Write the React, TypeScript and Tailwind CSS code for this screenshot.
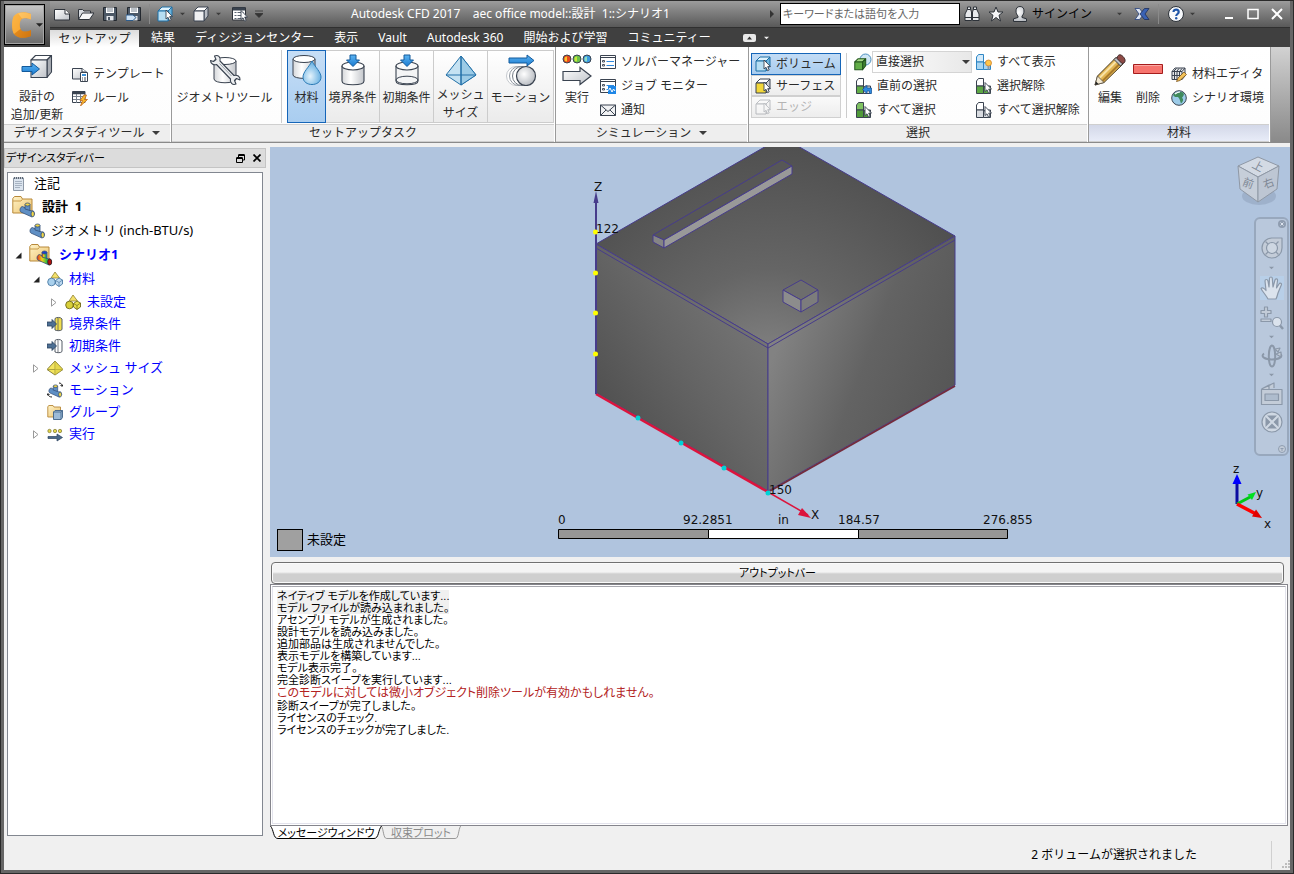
import React from "react";

type Kids = { children?: React.ReactNode };
const INK = "#3a4350";
const JP_UI = "font-['Noto_Sans','Noto_Sans_CJK_JP',sans-serif]";
const JP_LOG = "font-['Liberation_Sans','Noto_Sans_CJK_JP',sans-serif] [font-feature-settings:'palt']";

/* ---------- shared paint ---------- */
function Paints() {
  return (
    <svg width="0" height="0" className="absolute" aria-hidden="true">
      <defs>
        <linearGradient id="silver" x1="0" y1="0" x2="1" y2="1">
          <stop offset="0" stopColor="#ffffff" />
          <stop offset="1" stopColor="#bfc3c9" />
        </linearGradient>
        <linearGradient id="cyl" x1="0" y1="0" x2="1" y2="0">
          <stop offset="0" stopColor="#d5d7da" />
          <stop offset=".4" stopColor="#ffffff" />
          <stop offset="1" stopColor="#c3c6cb" />
        </linearGradient>
        <linearGradient id="blueArrow" x1="0" y1="0" x2="0" y2="1">
          <stop offset="0" stopColor="#5cb4f2" />
          <stop offset="1" stopColor="#1a7ad0" />
        </linearGradient>
        <radialGradient id="drop" cx=".4" cy=".65" r=".6">
          <stop offset="0" stopColor="#e6f4fc" />
          <stop offset="1" stopColor="#69b1e2" />
        </radialGradient>
        <radialGradient id="ball" cx=".4" cy=".4" r=".65">
          <stop offset="0" stopColor="#ffffff" />
          <stop offset="1" stopColor="#b5b9bf" />
        </radialGradient>
        <linearGradient id="gold" x1="0" y1="0" x2="1" y2="1">
          <stop offset="0" stopColor="#ffc25a" />
          <stop offset=".5" stopColor="#f59a22" />
          <stop offset="1" stopColor="#c96f10" />
        </linearGradient>
        <linearGradient id="folder" x1="0" y1="0" x2="1" y2="1">
          <stop offset="0" stopColor="#fff3c8" />
          <stop offset="1" stopColor="#ecc36e" />
        </linearGradient>
        <linearGradient id="rainbow" x1="0" y1="0" x2="1" y2="0">
          <stop offset="0" stopColor="#e02a1a" />
          <stop offset=".35" stopColor="#f4d11c" />
          <stop offset=".65" stopColor="#3fbf3a" />
          <stop offset="1" stopColor="#2b62d8" />
        </linearGradient>
      </defs>
    </svg>
  );
}

function Ico({ w = 16, h = 16, vb, children }: Kids & { w?: number; h?: number; vb?: string }) {
  return (
    <svg width={w} height={h} viewBox={vb ?? `0 0 ${w} ${h}`} className="block shrink-0" aria-hidden="true">
      {children}
    </svg>
  );
}

/* ---------- small shapes ---------- */
const Cursor = ({ x = 0, y = 0 }: { x?: number; y?: number }) => (
  <path transform={`translate(${x} ${y})`} d="M0 0v9l2-1.7 1.6 3.4 1.6-.8L3.7 6.600H6.500Z" fill="#fff" stroke={INK} strokeWidth=".9" />
);
const Caret = ({ color = "#3c3c3c", w = 7 }: { color?: string; w?: number }) => (
  <Ico w={w} h={4} vb="0 0 8 4">
    <path d="M0 0h8L4 4Z" fill={color} />
  </Ico>
);
const CubeShape = ({ top = "#fff", left = "#f0f1f3", right = "#b9bdc4", stroke = INK }) => (
  <g stroke={stroke} strokeLinejoin="round">
    <path d="M1 5 5 1H15L11 5Z" fill={top} />
    <path d="M11 5 15 1V10L11 15Z" fill={right} />
    <path d="M1 5H11V15H1Z" fill={left} />
  </g>
);
const PipeShape = ({ a = "#5f8fc4", b = "#f0d548" }) => (
  <g stroke="#34507a" strokeWidth=".8">
    <path d="M3.500 4.500 12 8.800 14.500 9 15.500 12 13 15 1.800 10C.3 8.500 1 5 3.500 4.500Z" fill={a} />
    <path d="M6 2.500h5v6L6 7Z" fill={a} />
    <ellipse cx="8.500" cy="2.500" rx="2.500" ry="1.500" fill={b} />
    <ellipse cx="13.700" cy="12" rx="1.700" ry="2.800" fill={b} />
  </g>
);

/* ---------- title bar icons ---------- */
const LogoC = () => (
  <Ico w={24} h={28}>
    <path d="M20 3C14 .5 7 .5 3 5 .5 9 .5 19 3 23c4 5 12 4.500 17 2v-6c-4 2-9 2.500-10.500-1-1-3-1-6 0-8.500C11 6.500 16 7 20 8.500Z" fill="url(#gold)" />
    <path d="M3 5c3-1 6-.5 8 2-1 .7-1.300 1.500-1.500 2.500C8 12 8.500 16 9.500 18L3 23C.5 19 .5 9 3 5Z" fill="#fbb040" opacity=".7" />
    <path d="M20 3v5.500C17 7 13.500 6.500 11 7.500L7 2.500C11 .8 16 1.200 20 3Z" fill="#ffd07a" opacity=".6" />
    <path d="M3 23 9.500 18c1.500 3.500 6.500 3 10.500 1v6c-5 2.500-13 3-17-2Z" fill="#d17a14" opacity=".55" />
  </Ico>
);
const NewDoc = () => (
  <Ico>
    <path d="M.5 3.500H11L15.500 8V14H.5Z" fill="url(#silver)" stroke="#2e333a" />
    <path d="M11 3.500V8h4.500" fill="#fff" stroke="#2e333a" />
  </Ico>
);
const OpenDoc = () => (
  <Ico>
    <path d="M.5 13.500V3.500h4l1.500 1.500H12.500V7.500" fill="#d8dce2" stroke="#2e333a" />
    <path d="M.5 13.500 4.500 7H16L11.500 13.500Z" fill="#f6f7f9" stroke="#2e333a" />
  </Ico>
);
const SaveDoc = ({ over = false }: { over?: boolean }) => (
  <Ico>
    <path d="M1.500 1.500H14.500V14.500H1.500Z" fill="#4c5866" stroke="#23282f" />
    <path d="M4 1.500h8v5.500H4Z" fill="#fff" />
    <path d="M5 3h6M5 5h6" stroke="#7b8592" />
    <path d="M4.500 10h7v4.500h-7Z" fill="#e4e7eb" />
    {over && <path d="M0 9h7l3 2.500-3 3H0Z" fill="#cfe3f5" stroke="#2e5d8c" />}
    {!over && <path d="M6 11h2v3H6Z" fill="#4c5866" />}
  </Ico>
);
const ListDoc = () => (
  <Ico>
    <path d="M.5 1.500H13.500V14H.5Z" fill="#fff" stroke="#2e333a" />
    <path d="M1 3h12" stroke="#39424e" strokeWidth="3" />
    <path d="M2.500 6.500h2m1 0h6m-9 3h2m1 0h6m-9 3h2m1 0h6" stroke="#5a6470" />
    <Cursor x={9} y={4.500} />
  </Ico>
);
const SelCube = ({ top = "#dff3fd", left = "#b6def3", right = "#6cb4dc", stroke = "#1d6ea5" }) => (
  <Ico>
    <CubeShape top={top} left={left} right={right} stroke={stroke} />
    <Cursor x={9} y={4} />
  </Ico>
);
const Cube = () => (
  <Ico>
    <CubeShape />
  </Ico>
);
const Binoculars = () => (
  <Ico>
    <g fill="#e7e9ec" stroke="#2d3239">
      <path d="M3.500 3 6.500 3 7.500 6V14.500H1V8Z" />
      <path d="M12.500 3 9.500 3 8.500 6V14.500H15V8Z" />
      <path d="M3.500 1h3v2.500h-3ZM9.500 1h3v2.500h-3Z" />
      <path d="M1 11.500h6.500M8.500 11.500H15" />
    </g>
  </Ico>
);
const Star = () => (
  <Ico>
    <path d="M8 1 10 6h5l-4 3.300L12.500 15 8 11.500 3.500 15 5 9.300 1 6H6Z" fill="#f4f5f7" stroke="#2d3239" />
  </Ico>
);
const Person = () => (
  <Ico>
    <path d="M8 .5c3 0 4 2 4 4.500 0 2-.8 4-2 5v1.500l4.500 1.300V15.500H1.500V12.800L6 11.500V10C4.800 9 4 7 4 5 4 2.500 5 .5 8 .5Z" fill="url(#ball)" stroke="#2d3239" />
  </Ico>
);
const ExchangeX = () => (
  <Ico>
    <path d="M1 2.500H5.500L9 7 9 9 5.500 13.500H1L5 8Z" fill="#dfe6f2" stroke="#24407c" strokeWidth=".8" />
    <path d="M15 2.500H10.500L6 8l4.500 5.500H15L11 8Z" fill="#3a62b4" stroke="#1d2f5c" strokeWidth=".8" />
  </Ico>
);
const Help = () => (
  <Ico w={18} h={18}>
    <circle cx="9" cy="9" r="7.500" fill="#f6f8fb" stroke="#2d3239" />
    <path d="M6.500 7c0-3.200 5.200-3.200 5.200 0C11.700 9 9.200 9 9.200 11" fill="none" stroke="#1f55a8" strokeWidth="2.200" />
    <circle cx="9.200" cy="13.200" r="1.200" fill="#1f55a8" />
  </Ico>
);

/* ---------- ribbon icons ---------- */
const CubeArrow = () => (
  <Ico w={32} h={30}>
    <g stroke={INK} strokeWidth="1.100" strokeLinejoin="round">
      <path d="M10 7 14.500 2.500H30.500L26 7Z" fill="#fff" />
      <path d="M26 7 30.500 2.500V19L26 24.500Z" fill="#a9adb4" />
      <path d="M10 7H26V24.500H10Z" fill="url(#silver)" />
    </g>
    <path d="M1 13.500H11V10L18.500 16 11 22V18.500H1Z" fill="url(#blueArrow)" stroke="#125a9c" />
  </Ico>
);
const CylTools = () => (
  <Ico w={32} h={32}>
    <path d="M5 7v18c0 5 22 5 22 0V7" fill="url(#cyl)" stroke={INK} />
    <ellipse cx="16" cy="7" rx="11" ry="3.500" fill="#fff" stroke={INK} />
    <path
      d="M1.500 6.500 4.500 7.500 7 5.500 5.500 2C9 .5 12 3 11 7L25 21.500c3-1 6.500 1 6 4.500l-3.500-1.500-2 2L27 30c-3.500 1.500-6.500-1.500-5.500-5L7.500 10.500C4.500 11.500 1.500 9.500 1.500 6.500Z"
      fill="#eceef0"
      stroke={INK}
      strokeWidth="1.100"
      strokeLinejoin="round"
    />
    <path d="M10.500 9.500 22.500 22" stroke="#9aa1aa" />
  </Ico>
);
const CylDrop = () => (
  <Ico w={32} h={32}>
    <path d="M2 5v16c0 4.500 22 4.500 22 0V5" fill="url(#cyl)" stroke={INK} />
    <ellipse cx="13" cy="5" rx="11" ry="3.500" fill="#fff" stroke={INK} />
    <path d="M21 7c3 6 9 11 9 16 0 10-18 10-18 0 0-5 6-10 9-16Z" fill="url(#drop)" stroke="#2a7ab5" />
  </Ico>
);
const CylIn = ({ clear = false }: { clear?: boolean }) => (
  <Ico w={32} h={32}>
    <path d="M5 12v15c0 5 22 5 22 0V12" fill={clear ? "#f4f5f6" : "url(#cyl)"} stroke={INK} strokeWidth="1.100" />
    <ellipse cx="16" cy="12" rx="11" ry="4" fill={clear ? "#fafafa" : "#fff"} stroke={INK} strokeWidth="1.100" />
    {clear && <ellipse cx="16" cy="26" rx="11" ry="3.800" fill="none" stroke={INK} />}
    <path d="M13 1h6v5h3.500L16 12.500 9.500 6H13Z" fill="url(#blueArrow)" stroke="#125a9c" />
  </Ico>
);
const MeshPyramid = () => (
  <Ico w={32} h={32}>
    <path d="M16 2 31 21 16 31 1 21Z" fill="#c5e2f2" stroke="#2471a8" />
    <path d="M16 2 31 21 16 31Z" fill="#9ccbe6" stroke="#2471a8" />
    <path d="M1 21H31M16 2V31" stroke="#2471a8" strokeWidth="1.100" />
  </Ico>
);
const MotionBall = () => (
  <Ico w={32} h={32}>
    <circle cx="11" cy="22" r="9.500" fill="#fff" stroke="#c4c8cd" />
    <circle cx="14" cy="22" r="9.500" fill="#fff" stroke="#9299a2" />
    <circle cx="17" cy="22" r="9.500" fill="#fff" stroke="#747c86" />
    <circle cx="21" cy="22" r="9.500" fill="url(#ball)" stroke={INK} strokeWidth="1.200" />
    <path d="M4 4H22V1L29 6.500 22 12V9H4Z" fill="url(#blueArrow)" stroke="#125a9c" />
  </Ico>
);
const RunBig = () => (
  <Ico w={30} h={32}>
    <circle cx="5" cy="5" r="4" fill="#e84a1e" stroke={INK} />
    <circle cx="15" cy="5" r="4" fill="#6cc24a" stroke={INK} />
    <circle cx="25" cy="5" r="4" fill="#3c9be0" stroke={INK} />
    <path d="M2.500 5a2.500 2.500 0 0 1 2.500-2.500v5A2.500 2.500 0 0 1 2.500 5Z" fill="#f9c62a" />
    <path d="M12.500 5a2.500 2.500 0 0 1 2.500-2.500v5A2.500 2.500 0 0 1 12.500 5Z" fill="#c8e63a" />
    <path d="M22.500 5a2.500 2.500 0 0 1 2.500-2.500v5A2.500 2.500 0 0 1 22.500 5Z" fill="#8fe0c0" />
    <path d="M1 17.500H18V13.500L29 22 18 30.500V26.500H1Z" fill="url(#silver)" stroke={INK} strokeWidth="1.200" />
  </Ico>
);
const Pencil = () => (
  <Ico w={32} h={32}>
    <path d="M1 31 3.500 22 22 3.500 29 10 10 28.500Z" fill="#e2b653" stroke="#4a3a20" />
    <path d="M5.500 24 24 5.500" stroke="#f8e2a6" strokeWidth="2" />
    <path d="M8.500 27 27 8.500" stroke="#a97a2a" strokeWidth="2" />
    <path d="M20 5.500 22.500 3l6.500 6.500L26.500 12Z" fill="#b9bdc3" stroke="#3f3f3f" />
    <path d="M23.500 2.500C25 0 27 .5 29 2.500s3 4.500 1 6.500l-2 .5-5-5Z" fill="#8d4a46" stroke="#3f2a2a" />
    <path d="M1 31 3.500 22 10 28.500Z" fill="#f4ead3" stroke="#5b5346" strokeWidth=".8" />
    <path d="M1 31 2 27.500 4.500 30Z" fill="#222" />
  </Ico>
);
const RedBar = () => (
  <Ico w={30} h={32}>
    <path d="M.5 10.500H29.500V19.500H.5Z" fill="#f7746e" stroke="#a51c1c" />
    <path d="M1.500 11.500h27" stroke="#fba9a4" />
  </Ico>
);
const Template = () => (
  <Ico>
    <path d="M.5 2.500H10L14.500 6V13H.5Z" fill="url(#silver)" stroke={INK} />
    <path d="M10 2.500V6h4.500" fill="#fff" stroke={INK} />
    <path d="M8.500 6.500h7v9h-7Z" fill="#fff" stroke={INK} />
    <path d="M10 8h4v2h-4Z" fill="#3c8fd6" />
    <path d="M10 12h1m1 0h2m-4 2h1m1 0h2" stroke={INK} />
  </Ico>
);
const Rule = () => (
  <Ico>
    <path d="M.5 1.500H13V12.500H.5Z" fill="#fff" stroke={INK} />
    <path d="M.5 3h12.500" stroke={INK} strokeWidth="2.500" />
    <path d="M1 6.500h12M1 9.500h12M4.500 4v9M8.500 4v9" stroke="#77808c" />
    <path d="M12 5 8 10.500h2.500L8.500 16 15.500 9.500H12.500L14.500 5Z" fill="#f7b92c" stroke="#c0651a" strokeWidth=".8" />
  </Ico>
);
const Manager = ({ wave = false }: { wave?: boolean }) => (
  <Ico>
    <path d="M.5 1.500H15.500V14.500H.5Z" fill="#fff" stroke={INK} />
    <path d="M1 3.500h14" stroke={INK} />
    <path d="M2.500 6.500h2v1.500h-2ZM2.500 10.500h2V12h-2Z" fill="none" stroke={INK} strokeWidth=".9" />
    <path d="M6.500 7.500h7.500M6.500 11.500h7.500" stroke="#2f8ae0" strokeWidth="1.200" />
    {wave && (
      <>
        <path d="M8 8h8v8H8Z" fill="#1e86e6" />
        <path d="M8.500 12.500 10 10l2 4 1.500-3 1.500 2" fill="none" stroke="#fff" />
      </>
    )}
  </Ico>
);
const Mail = () => (
  <Ico>
    <path d="M.5 3H15.500V13.500H.5Z" fill="#f1f2f4" stroke={INK} />
    <path d="M.5 3 8 9.500 15.500 3M.5 13.500 6 8M15.500 13.500 10 8" fill="none" stroke={INK} />
  </Ico>
);
const DirectSel = () => (
  <Ico w={18} h={18}>
    <circle cx="11.500" cy="6.500" r="5.500" fill="#cfe6f5" stroke="#4b8fbf" />
    <g transform="translate(0 5) scale(.78)" stroke="#22551d" strokeWidth="1.300" strokeLinejoin="round">
      <path d="M1 5 5 1H15L11 5Z" fill="#a9db8a" />
      <path d="M11 5 15 1V10L11 15Z" fill="#3f7f30" />
      <path d="M1 5H11V15H1Z" fill="#62ad47" />
    </g>
  </Ico>
);
type Stack = { upper: string; lower: string; base?: string; stroke?: string; mark: "back" | "cursor" | "bulb" };
const StackCubes = ({ upper, lower, base, stroke = INK, mark }: Stack) => (
  <Ico>
    <g stroke={stroke} strokeWidth="1" strokeLinejoin="round">
      <path d="M.5 3 2.500.5H7.500V8H.5Z" fill={upper} />
      <path d="M.5 8H7.500V15.500H.5Z" fill={lower} />
      <path d="M7.500 10 9 8H14.500V15.500H7.500Z" fill={base ?? lower} />
    </g>
    {mark === "cursor" && <Cursor x={9} y={4.500} />}
    {mark === "back" && <path d="M6.500 11.500 11 7.500V10H15.500V15.500H13.500V13H11V15.500Z" fill="#2f8ae0" stroke="#0f4f93" strokeWidth=".7" />}
    {mark === "bulb" && (
      <>
        <circle cx="12.500" cy="9" r="3" fill="#ffc64a" stroke="#d0822a" strokeWidth=".8" />
        <path d="M11.500 12h2V15.500h-2Z" fill="#8c95a0" />
      </>
    )}
  </Ico>
);
const MatEditor = () => (
  <Ico>
    <path d="M1 5.500 4 2H14V10L11 13.500H1Z" fill="#e6e8ea" stroke={INK} />
    <path d="M1 5.500H11V13.500M11 5.500 14 2M3.500 5v8M6 5v8M8.500 5v8M1 9.500h10M5.500 2.500 3 5M8 2.500 6 5M11 2.500 9 5" fill="none" stroke={INK} />
    <path d="M5.500 15.500 7 12 13 6l2.500 2.500L9 14.500Z" fill="#f4c35a" stroke="#7a5420" strokeWidth=".8" />
  </Ico>
);
const Globe = () => (
  <Ico>
    <circle cx="8" cy="8" r="7.300" fill="#9ccbe8" stroke={INK} />
    <path d="M2 5C4 2 8 1.500 12 2.500 14 5 12 6 11 8c2 1 1 4-1 5.500C9 11 9 9 7 7 5 6.500 4 8 2 5Z" fill="#3f8a5c" />
    <path d="M4 4c2-1.500 3-2 5-2" stroke="#fff" strokeWidth="1.200" fill="none" />
  </Ico>
);

/* ---------- tree icons ---------- */
const Note = () => (
  <Ico>
    <path d="M1.500 2H11.500V14.500H1.500Z" fill="#dce5ef" stroke="#8d98a6" />
    <path d="M2.500 1v2m2-2v2m2-2v2m2-2v2m2-2v2" stroke="#5b6674" />
    <path d="M3 5.500h7M3 7.500h7M3 9.500h7M3 11.500h5" stroke="#a7b3c2" />
  </Ico>
);
const FolderPipe = ({ hot = false }: { hot?: boolean }) => (
  <Ico w={24} h={24}>
    <path d="M.8 18V3.500L2.500 1.500H9L10.500 4H20V18Z" fill="url(#folder)" stroke="#b8893a" />
    <path d="M1 6h8l1.500-1.800" fill="none" stroke="#c99b4b" />
    <g transform="translate(7 7)">
      <PipeShape a={hot ? "url(#rainbow)" : "#5f8fc4"} b={hot ? "#1a3fd0" : "#f0d548"} />
      {hot && <ellipse cx="13.700" cy="12" rx="2" ry="3" fill="#b3130d" stroke="#222" strokeWidth=".7" />}
    </g>
  </Ico>
);
const Pipe = () => (
  <Ico>
    <PipeShape />
  </Ico>
);
const Materials = ({ yellow = false }: { yellow?: boolean }) => (
  <Ico>
    <path d="M8 1 12.500 7H4Z" fill="#f3e06a" stroke="#8f8230" strokeWidth=".8" />
    <circle cx="4.500" cy="11" r="3.800" fill={yellow ? "#d8cf38" : "#a9d0ec"} stroke={yellow ? "#6e6818" : "#4b7ba5"} strokeWidth=".9" />
    <path d="M8.500 9.500 12 7l3.500 2V13L12 15.500 8.500 13Z" fill={yellow ? "#e8de4a" : "#bcd8ef"} stroke={yellow ? "#6e6818" : "#4b7ba5"} strokeWidth=".9" />
    <path d="M8.500 9.500 12 11.500 15.500 9M12 11.500v4" fill="none" stroke={yellow ? "#6e6818" : "#4b7ba5"} strokeWidth=".7" />
  </Ico>
);
const Condition = ({ fill = "#f1de4e" }: { fill?: string }) => (
  <Ico>
    <path d="M8 2.500C9 1 14 1 15 3V13.500C14 15 10 15 8 14Z" fill={fill} stroke="#555c66" />
    <path d="M11 2v12.500" stroke="#555c66" strokeWidth=".8" />
    <path d="M0 6h5V3.500L9.500 8 5 12.500V10H0Z" fill="#4d6f93" stroke="#2c435e" strokeWidth=".8" />
  </Ico>
);
const MeshYellow = () => (
  <Ico>
    <path d="M8 1 16 9.500 8 15 0 9.500Z" fill="#f3e560" stroke="#7d7530" strokeWidth=".9" />
    <path d="M8 1v14M0 9.500h16" stroke="#a79c3a" strokeWidth=".9" />
    <path d="M8 1 16 9.500 8 15Z" fill="#d8c93a" opacity=".5" />
  </Ico>
);
const PipeMotion = () => (
  <Ico>
    <g transform="translate(1 2) scale(.88)">
      <PipeShape />
    </g>
    <path d="M12 1c1.800 0 3 1 3 3M13.500 3 15 4.500 16 2.500M1 12c0 2 2 3 4 3M0 13.500 1 11.500 2.500 13" fill="none" stroke="#222" />
  </Ico>
);
const Group = () => (
  <Ico>
    <path d="M.8 13V2.500L2 1.500H6L7 3H13.500V13Z" fill="url(#folder)" stroke="#b8893a" strokeWidth=".9" />
    <path d="M6.500 8 8 6.500H15.500V13.500L14 15.500H6.500Z" fill="#9dbbd8" stroke="#3f6288" strokeWidth=".9" />
    <path d="M6.500 8H14V15.500M14 8l1.500-1.500" fill="none" stroke="#3f6288" strokeWidth=".8" />
  </Ico>
);
const RunSmall = () => (
  <Ico>
    <g fill="#e3d648" stroke="#7d7530" strokeWidth=".7">
      <circle cx="2.500" cy="5" r="1.700" />
      <circle cx="8" cy="5" r="1.700" />
      <circle cx="13" cy="5" r="1.700" />
    </g>
    <path d="M1 10.500h9V8L15.500 11.500 10 15V12.500H1Z" fill="#49688a" stroke="#2c435e" strokeWidth=".7" />
  </Ico>
);

/* ---------- header ---------- */
const IconButton = ({ label, children, className = "" }: Kids & { label: string; className?: string }) => (
  <button type="button" aria-label={label} className={`flex shrink-0 items-center justify-center ${className}`}>
    {children}
  </button>
);

const MENU = ["結果", "ディシジョンセンター", "表示", "Vault", "Autodesk 360", "開始および学習", "コミュニティー"];

function Header() {
  return (
    <header className="flex bg-[#404040]">
      <div className="w-[46px] shrink-0 bg-linear-to-b from-[#8f8f8f] via-[#606060] via-60% to-[#404040] pt-[3px]">
        <button type="button" aria-label="アプリケーション メニュー" className="flex h-[41px] w-[41px] items-center gap-px border border-black bg-linear-to-b from-[#c9c9c9] to-[#6a6a6a] pl-[6px] shadow-[inset_0_0_0_1px_#a4a4a4]">
          <LogoC />
          <Caret color="#222" w={7} />
        </button>
      </div>
      <div className="min-w-0 flex-1">
        <div className="flex h-[27px] items-center border-b border-[#303030] bg-linear-to-b from-[#9c9c9c] to-[#595959]">
          <div className="flex items-center gap-2 pl-1">
            <IconButton label="新規"><NewDoc /></IconButton>
            <IconButton label="開く"><OpenDoc /></IconButton>
            <IconButton label="保存"><SaveDoc /></IconButton>
            <IconButton label="名前を付けて保存"><SaveDoc over /></IconButton>
          </div>
          <span className="mx-[7px] h-5 w-px bg-[#8a8a8a]" />
          <div className="flex items-center gap-[7px]">
            <IconButton label="ボリューム選択"><SelCube /></IconButton>
            <IconButton label="選択メニュー"><Caret w={5} /></IconButton>
            <IconButton label="外観" className="ml-px"><Cube /></IconButton>
            <IconButton label="外観メニュー"><Caret w={5} /></IconButton>
            <IconButton label="リスト" className="ml-1"><ListDoc /></IconButton>
            <IconButton label="カスタマイズ">
              <Ico w={8} h={8}>
                <path d="M0 1h8M0 3.500h8L4 7.500Z" fill="#333" stroke="#333" strokeWidth=".8" />
              </Ico>
            </IconButton>
          </div>
          <h1 className="min-w-0 flex-1 truncate text-center text-xs whitespace-pre text-white">
            {"Autodesk CFD 2017    aec office model::設計  1::シナリオ1"}
          </h1>
          <span className="mr-[6px] ml-3">
            <Ico w={4} h={8}><path d="M0 0 4 4 0 8Z" fill="#333" /></Ico>
          </span>
          <input aria-label="検索" placeholder="キーワードまたは語句を入力" className={`h-[22px] w-[180px] border border-black bg-white px-[2px] text-[11px] text-black placeholder:text-[#666] ${JP_LOG}`} />
          <div className="flex items-center gap-2 pl-1">
            <IconButton label="検索する"><Binoculars /></IconButton>
            <IconButton label="お気に入り"><Star /></IconButton>
            <button type="button" className="flex items-center gap-1 text-xs text-black">
              <Person />
              サインイン
            </button>
            <IconButton label="アカウント" className="ml-[17px]"><Caret w={5} /></IconButton>
            <IconButton label="Exchange" className="ml-1"><ExchangeX /></IconButton>
          </div>
          <span className="mx-[8px] h-5 w-px bg-[#8a8a8a]" />
          <IconButton label="ヘルプ"><Help /></IconButton>
          <IconButton label="ヘルプ メニュー" className="ml-[5px]"><Caret w={5} /></IconButton>
          <div className="ml-7 flex items-center gap-3 pr-[7px]">
            <IconButton label="最小化"><Ico w={12} h={12}><path d="M2 10h8" stroke="#fff" strokeWidth="2" /></Ico></IconButton>
            <IconButton label="最大化"><Ico w={12} h={12}><path d="M1 1.500h10v9H1Z" fill="none" stroke="#fff" strokeWidth="1.500" /></Ico></IconButton>
            <IconButton label="閉じる"><Ico w={12} h={12}><path d="M1 1l10 10M11 1 1 11" stroke="#fff" strokeWidth="2" /></Ico></IconButton>
          </div>
        </div>
        <nav className="flex h-[19px] items-end gap-5 text-xs whitespace-nowrap text-white">
          <button type="button" className="-mr-2 h-[17px] w-[89px] bg-linear-to-b from-[#dcdcdc] to-white leading-[17px] text-[#222]">セットアップ</button>
          {MENU.map((m) => (
            <button type="button" key={m} className="h-[18px] leading-[18px]">{m}</button>
          ))}
          <button type="button" aria-label="リボンを最小化" className="ml-3 flex h-[18px] items-center gap-2">
            <Ico w={13} h={8}><rect width="13" height="8" rx="2" fill="#e8e8e8" /><path d="M4 5.500h5L6.500 2.500Z" fill="#333" /></Ico>
            <Caret color="#eee" w={5} />
          </button>
        </nav>
      </div>
    </header>
  );
}

/* ---------- ribbon ---------- */
function Panel({ title, width, menu, tint, children }: Kids & { title: string; width: string; menu?: boolean; tint?: boolean }) {
  return (
    <section className={`flex shrink-0 flex-col border-r border-[#9a9a9a] pr-px ${width}`}>
      <div className="flex h-[77px] bg-linear-to-b from-white to-[#fdfdfd]">{children}</div>
      <h2 className={`flex h-[18px] items-center justify-center gap-2 border-t border-b border-[#cfcfcf] text-xs ${tint ? "bg-linear-to-b from-[#d3d8e8] to-[#e8ecf8]" : "bg-[#eeeeee]"}`}>
        {title}
        {menu && <Caret w={8} />}
      </h2>
    </section>
  );
}
const Big = ({ icon, lines, className = "" }: { icon: React.ReactNode; lines: string[]; className?: string }) => (
  <button type="button" className={`flex shrink-0 flex-col items-center text-xs leading-[18px] whitespace-nowrap ${className}`}>
    <span className="flex h-9 items-start pt-px">{icon}</span>
    {lines.map((l) => (
      <span key={l}>{l}</span>
    ))}
  </button>
);
const Small = ({ icon, text }: { icon: React.ReactNode; text: string }) => (
  <button type="button" className="flex h-6 items-center gap-[5px] text-xs whitespace-nowrap">
    {icon}
    {text}
  </button>
);
const Toggle = ({ icon, text, on, off }: { icon: React.ReactNode; text: string; on?: boolean; off?: boolean }) => (
  <button
    type="button"
    disabled={off}
    aria-pressed={!!on}
    className={`flex h-[22px] w-[90px] items-center gap-[5px] border pl-[3px] text-xs whitespace-nowrap ${
      on ? "border-[#1565b8] bg-linear-to-b from-[#c3dcf5] to-[#a8ccef]" : "border-[#d0d0d0] bg-linear-to-b from-[#fafafa] to-[#ededed]"
    } ${off ? "text-[#b4b4b4]" : ""}`}
  >
    {icon}
    {text}
  </button>
);
const TASK = "h-[73px] border border-l-0 border-[#cccccc] bg-linear-to-b from-white to-[#ebebeb] pt-[2px]";

function Ribbon() {
  return (
    <div className="flex h-24 border-b border-[#8a8a8a] bg-white text-[#2b2b2b]">
      <Panel title="デザインスタディツール" width="w-[168px]" menu>
        <Big icon={<CubeArrow />} lines={["設計の", "追加/更新"]} className="w-[66px] pt-[5px]" />
        <div className="flex flex-col pt-[15px] pl-[2px]">
          <Small icon={<Template />} text="テンプレート" />
          <Small icon={<Rule />} text="ルール" />
        </div>
      </Panel>
      <Panel title="セットアップタスク" width="w-[384px]">
        <Big icon={<CylTools />} lines={["ジオメトリツール"]} className="mt-[3px] mr-[5px] h-[73px] w-[110px] border-r border-[#cccccc] pt-[3px] pr-1" />
        <Big icon={<CylDrop />} lines={["材料"]} className="mt-[3px] h-[73px] w-[39px] border border-[#1565b8] bg-linear-to-b from-[#c6def6] to-[#a9cdf0] pt-[2px]" />
        <Big icon={<CylIn />} lines={["境界条件"]} className={`mt-[3px] w-[54px] ${TASK}`} />
        <Big icon={<CylIn clear />} lines={["初期条件"]} className={`mt-[3px] w-[54px] ${TASK}`} />
        <Big icon={<MeshPyramid />} lines={["メッシュ", "サイズ"]} className={`mt-[3px] w-[54px] ${TASK}`} />
        <Big icon={<MotionBall />} lines={["モーション"]} className={`mt-[3px] w-[66px] ${TASK}`} />
      </Panel>
      <Panel title="シミュレーション" width="w-[193px]" menu>
        <Big icon={<RunBig />} lines={["実行"]} className="w-[42px] pt-[6px]" />
        <div className="flex flex-col pt-[3px] pl-[2px]">
          <Small icon={<Manager />} text="ソルバーマネージャー" />
          <Small icon={<Manager wave />} text="ジョブ モニター" />
          <Small icon={<Mail />} text="通知" />
        </div>
      </Panel>
      <Panel title="選択" width="w-[340px]">
        <div className="my-[6px] flex w-[98px] flex-col border-r border-[#cccccc] pl-[2px]">
          <Toggle on icon={<SelCube />} text="ボリューム" />
          <Toggle icon={<SelCube top="#fff" left="#f2d73a" right="#c9ccd2" stroke={INK} />} text="サーフェス" />
          <Toggle off icon={<span className="opacity-30"><SelCube top="#fff" left="#fff" right="#eee" stroke={INK} /></span>} text="エッジ" />
        </div>
        <div className="flex w-[128px] flex-col pt-[3px] pl-[7px]">
          <div className="flex h-6 items-center">
            <DirectSel />
            <div className="relative">
              <select aria-label="選択モード" className="block h-[22px] w-[100px] appearance-none border border-[#d4d4d4] bg-linear-to-r from-white to-[#e8e8e8] pl-[3px] text-xs">
                <option>直接選択</option>
              </select>
              <span className="pointer-events-none absolute top-[9px] right-[2px]"><Caret w={8} /></span>
            </div>
          </div>
          <div className="pl-[2px]">
            <Small icon={<StackCubes upper="#fff" lower="#62ad47" base="#d8dbe0" mark="back" />} text="直前の選択" />
            <Small icon={<StackCubes upper="#7fc262" lower="#4f9a38" mark="cursor" />} text="すべて選択" />
          </div>
        </div>
        <div className="flex flex-col pt-[3px] pl-px">
          <Small icon={<StackCubes upper="#d3eafa" lower="#a9d5f1" stroke="#2f86c4" mark="bulb" />} text="すべて表示" />
          <Small icon={<StackCubes upper="#fff" lower="#5da744" mark="cursor" />} text="選択解除" />
          <Small icon={<StackCubes upper="#fff" lower="#d8dbe0" mark="cursor" />} text="すべて選択解除" />
        </div>
      </Panel>
      <Panel title="材料" width="w-[182px]" tint>
        <Big icon={<Pencil />} lines={["編集"]} className="w-[42px] pt-[6px]" />
        <Big icon={<RedBar />} lines={["削除"]} className="w-[34px] pt-[6px]" />
        <div className="flex flex-col pt-[15px] pl-[6px]">
          <Small icon={<MatEditor />} text="材料エディタ" />
          <Small icon={<Globe />} text="シナリオ環境" />
        </div>
      </Panel>
      <div className="flex-1 bg-linear-to-b from-[#d2d2d2] to-[#8a8a8a]" />
    </div>
  );
}

/* ---------- study tree ---------- */
type Row = { text: string; icon: React.ReactNode; level: number; open?: boolean; shut?: boolean; look: string };
const BLUE = "text-[#0000ff]";
const ROWS: Row[] = [
  { text: "注記", icon: <Note />, level: 0, look: "h-[22px] text-black" },
  { text: "設計  1", icon: <FolderPipe />, level: 0, look: "h-6 font-bold text-black" },
  { text: "ジオメトリ (inch-BTU/s)", icon: <Pipe />, level: 1, look: "h-6 text-black" },
  { text: "シナリオ1", icon: <FolderPipe hot />, level: 1, open: true, look: `h-6 font-bold ${BLUE}` },
  { text: "材料", icon: <Materials />, level: 2, open: true, look: `h-6 ${BLUE}` },
  { text: "未設定", icon: <Materials yellow />, level: 3, shut: true, look: `h-[22px] ${BLUE}` },
  { text: "境界条件", icon: <Condition />, level: 2, look: `h-[22px] ${BLUE}` },
  { text: "初期条件", icon: <Condition fill="#ffffff" />, level: 2, look: `h-[22px] ${BLUE}` },
  { text: "メッシュ サイズ", icon: <MeshYellow />, level: 2, shut: true, look: `h-[22px] ${BLUE}` },
  { text: "モーション", icon: <PipeMotion />, level: 2, look: `h-[22px] ${BLUE}` },
  { text: "グループ", icon: <Group />, level: 2, look: `h-[22px] ${BLUE}` },
  { text: "実行", icon: <RunSmall />, level: 2, shut: true, look: `h-[22px] ${BLUE}` },
];
const INDENT = ["pl-1", "pl-1", "pl-[22px]", "pl-10"];

function StudyDock() {
  return (
    <aside className="flex w-[262px] shrink-0 flex-col pt-px">
      <div className="flex h-5 items-center border border-[#c4c4c4] bg-[#dcdcdc] pl-px">
        <h2 className={`flex-1 text-[11px] ${JP_LOG}`}>デザインスタディバー</h2>
        <IconButton label="フロート" className="mr-2">
          <Ico w={9} h={9}>
            <path d="M2.500 3V1H8.500V6H7M.5 4H6.500V8.500H.5Z" fill="none" stroke="#000" />
            <path d="M2.500 1h6M.5 4h6" stroke="#000" strokeWidth="1.800" />
          </Ico>
        </IconButton>
        <IconButton label="閉じる" className="mr-1">
          <Ico w={8} h={8}><path d="M.5.5l7 7M7.500.5l-7 7" stroke="#000" strokeWidth="1.700" /></Ico>
        </IconButton>
      </div>
      <ul className="mx-[3px] mt-1 mb-[3px] flex-1 border border-[#828790] bg-white text-[13px]">
        {ROWS.map((r) => (
          <li key={r.text} className={`flex items-center gap-[6px] whitespace-pre ${INDENT[r.level]} ${r.look}`}>
            <span className="flex items-center">
              {r.level > 0 && (
                <span className="flex w-[17px] justify-start pl-[3px]">
                  {r.open && <Ico w={7} h={7}><path d="M6.500.5V6.500H.5Z" fill="#222" /></Ico>}
                  {r.shut && <Ico w={6} h={9}><path d="M.5.8 5 4.500.5 8.200Z" fill="#fff" stroke="#999" /></Ico>}
                </span>
              )}
              {r.icon}
            </span>
            {r.text}
          </li>
        ))}
      </ul>
    </aside>
  );
}

/* ---------- 3D view ---------- */
const EDGE = "#473c8b";
function Scene() {
  return (
    <svg viewBox="270 147 1020 410" className="block h-full w-full" role="img" aria-label="モデル">
      <defs>
        <radialGradient id="topFace" gradientUnits="userSpaceOnUse" cx="768" cy="370" r="225">
          <stop offset="0" stopColor="#858585" />
          <stop offset=".45" stopColor="#656565" />
          <stop offset="1" stopColor="#505050" />
        </radialGradient>
        <linearGradient id="leftFace" gradientUnits="userSpaceOnUse" x1="765" y1="330" x2="620" y2="430">
          <stop offset="0" stopColor="#757575" />
          <stop offset=".5" stopColor="#646464" />
          <stop offset="1" stopColor="#515151" />
        </linearGradient>
        <linearGradient id="rightFace" gradientUnits="userSpaceOnUse" x1="768" y1="370" x2="950" y2="440">
          <stop offset="0" stopColor="#828282" />
          <stop offset=".45" stopColor="#636363" />
          <stop offset="1" stopColor="#545454" />
        </linearGradient>
      </defs>
      <g stroke={EDGE} strokeLinejoin="round">
        <path d="M596 244 782 137 955 236 768 344Z" fill="url(#topFace)" />
        <path d="M596 244 768 344V491L596 393Z" fill="url(#leftFace)" />
        <path d="M768 344 955 236V385L768 491Z" fill="url(#rightFace)" />
        <path d="M596 248 768 348 955 240" fill="none" />
        <path d="M653 235 782 160 792 166 664 240Z" fill="#575757" />
        <path d="M653 235 664 240V248L653 242Z" fill="#858585" />
        <path d="M664 240 792 166V174L664 248Z" fill="#999" />
        <path d="M783 290 801 280 818 290 801 300Z" fill="#6d6d6d" />
        <path d="M783 290 801 300V312L783 302Z" fill="#8c8c8c" />
        <path d="M801 300 818 290V302L801 312Z" fill="#7c7c7c" />
      </g>
      <path d="M770 491 955 386" stroke="#732c3c" strokeWidth="2" />
      <path d="M596 394 768 492" stroke="#dc143c" strokeWidth="2.500" />
      <path d="M768 492 808 515" stroke="#dc143c" strokeWidth="1.500" />
      <path d="M811 518 798 515 802 508Z" fill="#dc143c" />
      <path d="M596 394V198" stroke={EDGE} strokeWidth="2" />
      <path d="M596 191 598.500 203H593.500Z" fill={EDGE} />
      <g fill="#ffff00">
        <circle cx="595.500" cy="232" r="2.500" />
        <circle cx="595.500" cy="273" r="2.500" />
        <circle cx="595.500" cy="313" r="2.500" />
        <circle cx="595.500" cy="354" r="2.500" />
      </g>
      <g fill="#00d2d6">
        <circle cx="638" cy="418" r="2.500" />
        <circle cx="681" cy="443" r="2.500" />
        <circle cx="724" cy="468" r="2.500" />
        <circle cx="768" cy="493" r="2.500" />
      </g>
      <g className="font-['DejaVu_Sans',sans-serif] text-xs" fill="#111">
        <text x="594" y="191">Z</text>
        <text x="596" y="233">122</text>
        <text x="769" y="494">150</text>
        <text x="811" y="519">X</text>
        <text x="558" y="524">0</text>
        <text x="683" y="524">92.2851</text>
        <text x="778" y="524">in</text>
        <text x="838" y="524">184.57</text>
        <text x="983" y="524">276.855</text>
      </g>
      <g stroke="#000">
        <path d="M558.500 529.500H708.500V538.500H558.500Z" fill="#969696" />
        <path d="M708.500 529.500H858.500V538.500H708.500Z" fill="#fff" />
        <path d="M858.500 529.500H1007.500V538.500H858.500Z" fill="#969696" />
      </g>
    </svg>
  );
}

const ViewCube = () => (
  <Ico w={48} h={54}>
    <ellipse cx="25" cy="42" rx="17" ry="9" fill="#7f90a8" opacity=".35" />
    <g stroke="#8f98a5" strokeLinejoin="round">
      <path d="M4 12 24 3 45 12 24 23Z" fill="#d3dae4" />
      <path d="M4 12 24 23V48L6 35Z" fill="#c6ced9" />
      <path d="M45 12 24 23V48L43 35Z" fill="#bdc6d3" />
    </g>
    <g fill="#7d8794" className="font-['Noto_Sans_CJK_JP',sans-serif] text-[11px]" textAnchor="middle">
      <text x="24" y="16" transform="rotate(28 24 12)">上</text>
      <text x="14" y="33" transform="rotate(20 14 30)">前</text>
      <text x="35" y="33" transform="rotate(-20 35 30)">右</text>
    </g>
  </Ico>
);

const Nav = ({ label, children }: Kids & { label: string }) => (
  <IconButton label={label}>
    <Ico w={24} h={24}>
      <g fill="#c3ccd8" stroke="#8b98a9" strokeWidth="1.200" strokeLinejoin="round">{children}</g>
    </Ico>
  </IconButton>
);

function NavBar() {
  return (
    <div className="absolute top-[70px] right-px flex h-[239px] w-[35px] flex-col items-center rounded-md border-2 border-[#98a8bd] bg-[#b9c8dc]">
      <IconButton label="ナビゲーションを閉じる" className="h-[10px] self-end">
        <Ico w={10} h={10}><circle cx="5" cy="5" r="4" fill="#8f9db0" /><path d="M3.500 3.500l3 3M6.500 3.500l-3 3" stroke="#dde4ee" /></Ico>
      </IconButton>
      <div className="mt-[7px]"><Nav label="ホイール"><path d="M2 12A10 10 0 0 1 12 2H22V12A10 10 0 0 1 2 12Z" /><circle cx="12" cy="12" r="5.500" fill="#ced7e2" /><path d="M8 8 5.500 5.500M16 8l2.500-2.500M8 16l-2.500 2.500M16 16l2.500 2.500" /></Nav></div>
      <span className="my-[6px]"><Caret color="#8b98a9" w={5} /></span>
      <div className="bg-[#b8cfe8]"><Nav label="画面移動"><path d="M8 23C6 19 2 15 1 12.500 2 11 4 12 6 14.500L5 5c0-2 2.500-2 3 0l1 6 .5-8.500c.2-2 2.800-2 2.800 0L13 11l2-7c.5-1.800 2.800-1.300 2.500.5L16.500 12l2.500-4c1-1.700 3-.6 2.300 1L18 17c-.5 2-1 4-2 6Z" fill="#dbe3ed" /></Nav></div>
      <div className="mt-[6px]"><Nav label="ズーム"><path d="M1 4.500H4.500V1H7.500V4.500H11V7.500H7.500V11H4.500V7.500H1Z" /><path d="M1 13h10v2.500H1Z" /><circle cx="17" cy="16" r="4.500" fill="#dbe3ed" /><path d="M20 19.500l3 3.500" strokeWidth="2.500" /></Nav></div>
      <span className="my-[5px]"><Caret color="#8b98a9" w={5} /></span>
      <Nav label="オービット"><path d="M12 1.500c4 0 4.500 21 0 21s-4-21 0-21Z" fill="none" strokeWidth="2" /><path d="M20 9.500c4 3-1 6-8 6s-12-3-8-6" fill="none" strokeWidth="2" /><path d="M15 5l5-1-2 4ZM16 10l5-2v5Z" /></Nav>
      <span className="my-[5px]"><Caret color="#8b98a9" w={5} /></span>
      <Nav label="ルック"><path d="M1.500 7 14 1v5M1.500 7 9 3v4" /><path d="M1.500 7.500H22V22.500H1.500Z" /><path d="M5 12H18.500V18.500H5Z" fill="#aebccd" /></Nav>
      <div className="mt-1"><Nav label="全体表示"><circle cx="12" cy="12" r="10" fill="#cfd8e3" /><path d="M7 5.500 12 10.500 17 5.500ZM7 18.500 12 13.500 17 18.500ZM5.500 7 10.500 12 5.500 17ZM18.500 7 13.500 12 18.500 17Z" fill="#8b98a9" stroke="none" /></Nav></div>
      <div className="mt-auto self-end"><Ico w={10} h={10}><circle cx="5" cy="5" r="3.500" fill="#c3ccd8" stroke="#8f9db0" /><path d="M3.500 4.500h3M4 6h2" stroke="#8f9db0" /></Ico></div>
    </div>
  );
}

const Triad = () => (
  <Ico w={46} h={70}>
    <path d="M9 41V15" stroke="#0c0ca0" strokeWidth="3" />
    <path d="M9 11 13.500 21H4.500Z" fill="#0000ff" />
    <path d="M9 41 24 33" stroke="#00c814" strokeWidth="3" />
    <path d="M28 29 24 37 19.500 31.500Z" fill="#00e020" />
    <path d="M9 41 28 51" stroke="#ff0000" strokeWidth="3.500" />
    <path d="M34 55 24 53.500 28 46.500Z" fill="#e00000" />
    <g className="font-['DejaVu_Sans',sans-serif] text-xs" fill="#111">
      <text x="5" y="10">z</text>
      <text x="28" y="34">y</text>
      <text x="36" y="65">x</text>
    </g>
  </Ico>
);

function Viewport() {
  return (
    <section className="relative min-h-0 flex-1 overflow-hidden bg-[#b0c4de]">
      <Scene />
      <div className="absolute top-[7px] right-[8px]"><ViewCube /></div>
      <NavBar />
      <div className="absolute right-[16px] bottom-6"><Triad /></div>
      <div className="absolute bottom-[6px] left-[7px] flex items-center gap-1 text-[13px] text-black">
        <span className="h-[22px] w-[26px] border border-black bg-[#a0a0a0]" />
        未設定
      </div>
    </section>
  );
}

/* ---------- output ---------- */
const LOG = [
  "ネイティブ モデルを作成しています...",
  "モデル ファイルが読み込まれました。",
  "アセンブリ モデルが生成されました。",
  "設計モデルを読み込みました。",
  "追加部品は生成されませんでした。",
  "表示モデルを構築しています...",
  "モデル表示完了。",
  "完全診断スイープを実行しています...",
  "このモデルに対しては微小オブジェクト削除ツールが有効かもしれません。",
  "診断スイープが完了しました。",
  "ライセンスのチェック.",
  "ライセンスのチェックが完了しました.",
];
const WARN = 8;

const SheetTab = ({ text, active, width }: { text: string; active?: boolean; width: string }) => (
  <button type="button" className={`relative h-[13px] text-[11px] leading-[12px] ${width} ${active ? "z-10 text-black" : "-ml-px text-[#8a8a8a]"}`}>
    <svg viewBox="0 0 112 13" preserveAspectRatio="none" className="absolute inset-0 h-full w-full" aria-hidden="true">
      <path d="M.5 0C4 4 3 12.500 8 12.500H104C109 12.500 108 4 111.500 0" fill={active ? "#fff" : "#f0f0f0"} stroke={active ? "#000" : "#8a8a8a"} />
    </svg>
    <span className="relative">{text}</span>
  </button>
);

function Output() {
  return (
    <section className={`shrink-0 ${JP_LOG}`}>
      <button type="button" className="mt-[5px] mr-[6px] ml-px flex h-[22px] w-[calc(100%-7px)] items-center justify-center rounded-sm border border-[#707070] bg-linear-to-b from-[#f4f4f4] from-45% to-[#cfcfcf] to-55% text-[11px] text-black shadow-[inset_0_0_0_1px_#fafafa]">
        アウトプットバー
      </button>
      <div className="mr-[2px] h-[242px] border border-[#85858c] bg-white p-px">
        <div className="h-full border border-[#e3e3ec] border-t-[#a9a9b0] pt-[3px] pl-1 text-[11px] text-black">
          {LOG.map((l, i) => (
            <p key={l} className={`w-fit ${i === WARN ? "h-[14px] text-xs leading-[14px] text-[#b22222]" : "h-3 leading-3"} ${i < 2 ? "bg-[#f0f0f0]" : ""}`}>
              {l}
            </p>
          ))}
        </div>
      </div>
      <div className="flex h-[13px]">
        <SheetTab text="メッセージウィンドウ" active width="w-28" />
        <SheetTab text="収束プロット" width="w-20" />
      </div>
    </section>
  );
}

export default function App() {
  return (
    <div className={`flex h-screen flex-col border border-[#2a2a2a] bg-[#666666] ${JP_UI} text-xs text-black`}>
      <Paints />
      <div className="mx-[3px] mb-[3px] flex min-h-0 flex-1 flex-col bg-[#f0f0f0]">
        <Header />
        <Ribbon />
        <main className="flex min-h-0 flex-1 pt-1">
          <StudyDock />
          <div className="ml-1 flex min-w-0 flex-1 flex-col">
            <Viewport />
            <Output />
          </div>
        </main>
        <footer className="flex h-[31px] shrink-0 items-center">
          <p className="ml-auto">2 ボリュームが選択されました</p>
          <span className="mr-2 ml-[74px] h-7 w-px bg-[#d0d0d0]" />
          <span className="self-end pb-px">
            <Ico w={10} h={10}>
              <path d="M8 1h2v2H8ZM8 4h2v2H8ZM8 7h2v2H8ZM5 4h2v2H5ZM5 7h2v2H5ZM2 7h2v2H2Z" fill="#bdbdbd" />
            </Ico>
          </span>
        </footer>
      </div>
    </div>
  );
}
